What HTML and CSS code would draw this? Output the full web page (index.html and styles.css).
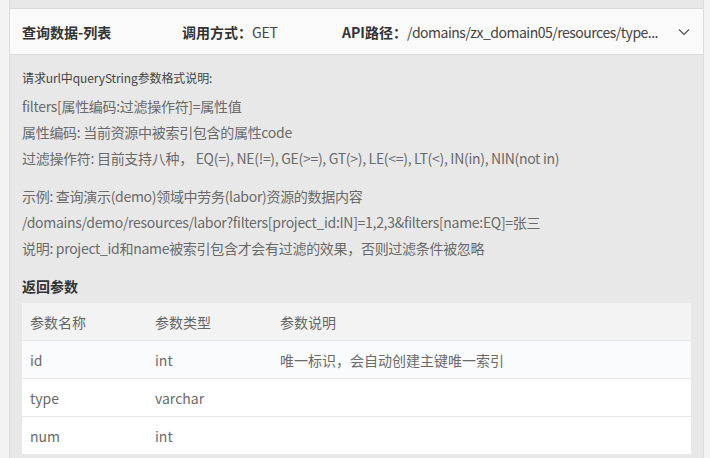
FILE: index.html
```html
<!DOCTYPE html>
<html lang="zh-CN">
<head>
<meta charset="utf-8">
<title>API</title>
<link rel="stylesheet" href="styles.css">
</head>
<body>
<div class="panel">
  <div class="head">
    <div class="title">查询数据-列表</div>
    <div class="method"><b>调用方式：</b><span class="val">GET</span></div>
    <div class="path"><b>API路径：</b><span class="val path-val">/domains/zx_domain05/resources/type...</span></div>
    <svg class="chev" width="12" height="8" viewBox="0 0 12 8"><polyline points="1,1.5 6,6.5 11,1.5" fill="none" stroke="#555" stroke-width="1.2"/></svg>
  </div>
  <div class="body">
    <p class="intro">请求url中queryString参数格式说明:</p>
    <div class="para">
      <p>filters[属性编码:过滤操作符]=属性值</p>
      <p>属性编码: 当前资源中被索引包含的属性code</p>
      <p>过滤操作符: 目前支持八种， EQ(=), NE(!=), GE(&gt;=), GT(&gt;), LE(&lt;=), LT(&lt;), IN(in), NIN(not in)</p>
    </div>
    <div class="para gap">
      <p>示例: 查询演示(demo)领域中劳务(labor)资源的数据内容</p>
      <p>/domains/demo/resources/labor?filters[project_id:IN]=1,2,3&amp;filters[name:EQ]=张三</p>
      <p>说明: project_id和name被索引包含才会有过滤的效果，否则过滤条件被忽略</p>
    </div>
    <h3 class="sub">返回参数</h3>
    <table class="params">
      <thead>
        <tr><th class="c1">参数名称</th><th class="c2">参数类型</th><th>参数说明</th></tr>
      </thead>
      <tbody>
        <tr class="hl"><td>id</td><td>int</td><td>唯一标识，会自动创建主键唯一索引</td></tr>
        <tr><td>type</td><td>varchar</td><td></td></tr>
        <tr><td>num</td><td>int</td><td></td></tr>
      </tbody>
    </table>
  </div>
</div>
</body>
</html>
```
FILE: styles.css
```css
html, body {
  margin: 0;
  padding: 0;
  background: #f3f3f3;
  font-family: "Noto Sans CJK SC", "Noto Sans", sans-serif;
}
.panel {
  margin-left: 9px;
  width: 695px;
  height: 458px;
  border-left: 1px solid #dcdcdc;
  border-right: 1px solid #dcdcdc;
  background: #e8e8e8;
  padding-top: 8px;
  box-sizing: border-box;
  overflow: hidden;
}
.head {
  height: 45px;
  background: #fafafa;
  border-top: 1px solid #dcdcdc;
  border-bottom: 1px solid #dcdcdc;
  display: flex;
  align-items: center;
  padding: 0 12px;
  font-size: 14px;
  color: #333;
  white-space: nowrap;
}
.head b { font-weight: bold; }
.head .val { color: #444; letter-spacing: -0.25px; }
.head .path-val { letter-spacing: -0.5px; }
.title { font-weight: bold; width: 160px; }
.method { width: 160px; }
.path { flex: 1; min-width: 0; }
.chev { flex: none; margin-right: 1px; }
.body {
  padding: 10px 12px 0 12px;
  color: #6a6a6a;
  font-size: 14px;
}
.body p { margin: 0; line-height: 26px; letter-spacing: -0.3px; }
.body .intro { font-size: 12px; color: #444; margin-bottom: 2px; letter-spacing: -0.1px; }
.para.gap { margin-top: 12px; }
.sub {
  margin: 12px 0 4px;
  font-size: 14px;
  line-height: 26px;
  color: #333;
  font-weight: bold;
}
.params {
  width: 100%;
  border-collapse: collapse;
  background: #fff;
  font-size: 14px;
  color: #6a6a6a;
}
.params th, .params td {
  text-align: left;
  font-weight: normal;
  height: 37px;
  padding: 0 8px;
  border-bottom: 1px solid #e6e6e6;
}
.params th { background: #f3f3f3; color: #666; }
.params .c1, .params .c2 { width: 109px; }
.params tr.hl td { background: #fafbfd; }
```
